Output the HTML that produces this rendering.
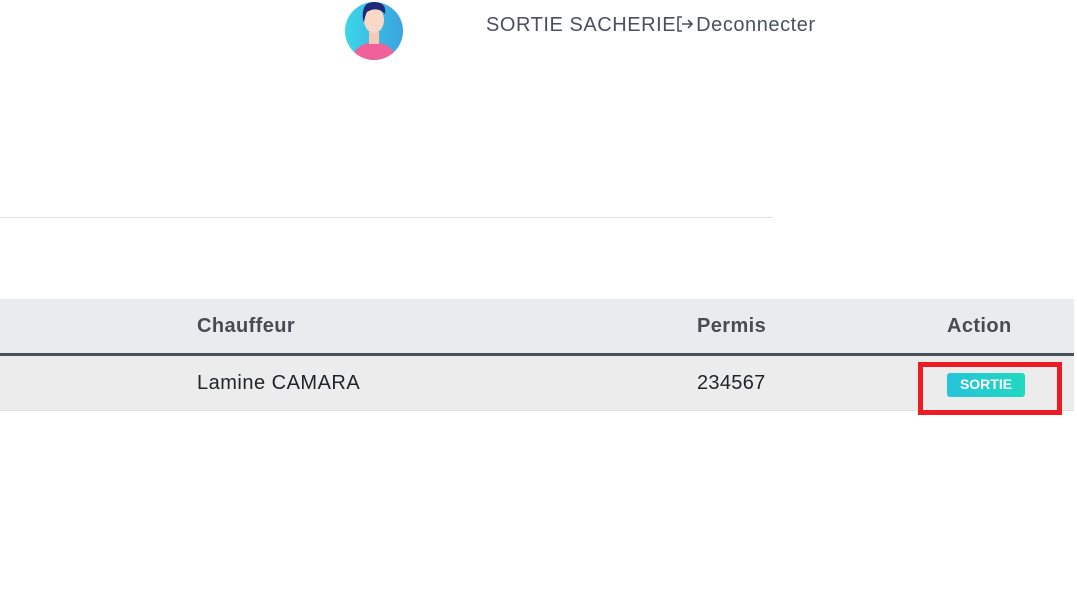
<!DOCTYPE html>
<html><head><style>
body{margin:0;width:1077px;height:600px;background:#fff;font-family:"Liberation Sans",sans-serif;position:relative;overflow:hidden}
.a{position:absolute}
</style></head><body>
<svg class="a" style="left:343px;top:0" width="62" height="62" viewBox="0 0 62 62">
<defs><clipPath id="c"><circle cx="31" cy="31" r="29"/></clipPath>
<linearGradient id="g" x1="0" x2="1"><stop offset="0" stop-color="#3dd6e8"/><stop offset="1" stop-color="#3aa3e0"/></linearGradient></defs>
<circle cx="31" cy="31" r="29" fill="url(#g)"/>
<g clip-path="url(#c)">
<path d="M8 62 Q10 44 31 42 Q52 44 54 62Z" fill="#f0609b"/>
<rect x="26" y="32" width="10" height="12" fill="#f6c9b5"/>
<ellipse cx="31" cy="20" rx="10" ry="13" fill="#f9d8c8"/>
<path d="M20 20 Q18 2 31 2 Q44 2 42 14 Q34 6 24 12 Q22 16 21 22Z" fill="#1e2a78"/>
</g></svg>
<div class="a" style="left:486px;top:14px;font-size:20px;letter-spacing:0.55px;color:#4a5060;white-space:nowrap">SORTIE SACHERIE<svg width="20" height="18" viewBox="0 0 20 18" style="vertical-align:-2px"><path d="M6 2H2V16H6" fill="none" stroke="#4a5060" stroke-width="1.6"/><path d="M6 9H16M12 5L16 9L12 13" fill="none" stroke="#4a5060" stroke-width="1.6"/></svg>Deconnecter</div>
<div class="a" style="left:0;top:217px;width:773px;height:1px;background:#dee2e6"></div>
<div class="a" style="left:0;top:299px;width:1074px;height:54px;background:#e9ecef"></div>
<div class="a" style="left:0;top:353px;width:1074px;height:3px;background:#495057"></div>
<div class="a" style="left:0;top:356px;width:1074px;height:54px;background:#ececec;border-bottom:1px solid #dee2e6"></div>
<div class="a" style="left:197px;top:315px;font-size:20px;letter-spacing:0.4px;font-weight:bold;color:#464c52">Chauffeur</div>
<div class="a" style="left:697px;top:315px;font-size:20px;letter-spacing:0.4px;font-weight:bold;color:#464c52">Permis</div>
<div class="a" style="left:947px;top:315px;font-size:20px;letter-spacing:0.4px;font-weight:bold;color:#464c52">Action</div>
<div class="a" style="left:197px;top:372px;font-size:20px;letter-spacing:0.5px;color:#212529">Lamine CAMARA</div>
<div class="a" style="left:697px;top:372px;font-size:20px;letter-spacing:0.3px;color:#212529">234567</div>
<div class="a" style="left:918px;top:362px;width:134px;height:43px;border:5px solid #ed1c24"></div>
<div class="a" style="left:947px;top:373px;width:78px;height:24px;border-radius:3px;background:linear-gradient(90deg,#26c3d9,#20d8bf);color:#fff;font-size:14px;font-weight:bold;text-align:center;line-height:23px">SORTIE</div>
</body></html>
